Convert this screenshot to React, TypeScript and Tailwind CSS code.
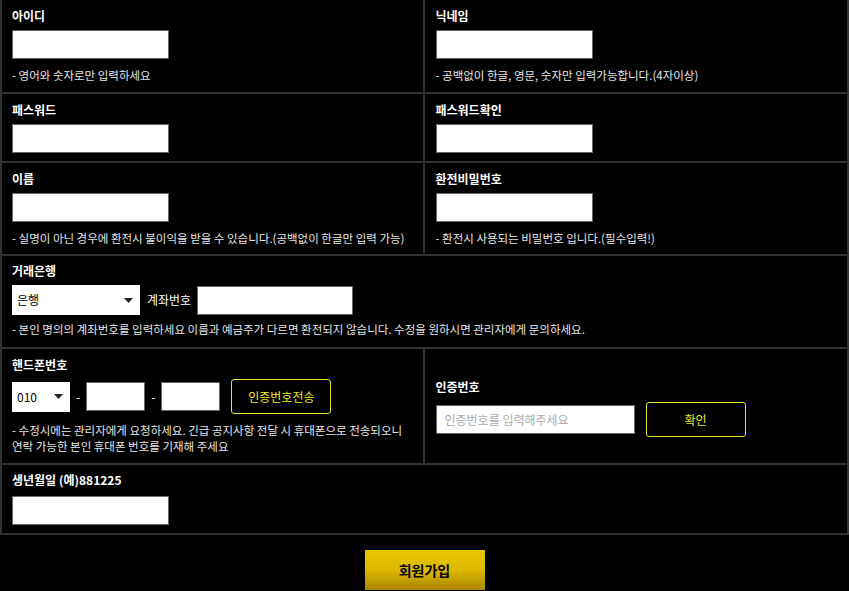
import React from "react";

const font = "font-['Noto_Sans_CJK_KR','Noto_Sans',sans-serif]";

function Label({ children }: { children: React.ReactNode }) {
  return <div className="text-[12px] font-bold leading-[16px] text-white">{children}</div>;
}

function Help({ children }: { children: React.ReactNode }) {
  return <div className="mt-[8px] text-[11.5px] leading-[16px] text-[#e6e6e6]">{children}</div>;
}

function Box({ w = "w-[157px]", placeholder }: { w?: string; placeholder?: string }) {
  return (
    <input
      className={`${w} h-[29px] border border-[#666] bg-white px-2 text-[12px] text-black outline-none placeholder:text-[#aaa]`}
      placeholder={placeholder}
    />
  );
}

function Caret() {
  return (
    <svg width="9" height="5" viewBox="0 0 9 5">
      <path d="M0 0h9L4.5 5z" fill="#222" />
    </svg>
  );
}

function FakeSelect({ label, w }: { label: string; w: string }) {
  return (
    <div className={`${w} flex h-[30px] items-center justify-between bg-white pl-[5px] pr-[7px] text-[12px] text-black`}>
      <span>{label}</span>
      <Caret />
    </div>
  );
}

function Cell({ children, right = false, pb = "pb-[8px]" }: { children: React.ReactNode; right?: boolean; pb?: string }) {
  return (
    <div className={`px-[10px] pt-[8px] ${pb} ${right ? "pl-[11px]" : "border-r-2 border-[#333]"}`}>
      {children}
    </div>
  );
}

export default function App() {
  return (
    <div className={`min-h-[591px] w-[849px] bg-black ${font}`}>
      <div className="border-x-2 border-b-2 border-[#333]">
        {/* 아이디 / 닉네임 */}
        <div className="grid grid-cols-2 border-b-2 border-[#333]">
          <Cell pb="pb-[9px]">
            <Label>아이디</Label>
            <div className="mt-[6px]"><Box /></div>
            <Help>- 영어와 숫자로만 입력하세요</Help>
          </Cell>
          <Cell right pb="pb-[9px]">
            <Label>닉네임</Label>
            <div className="mt-[6px]"><Box /></div>
            <Help>- 공백없이 한글, 영문, 숫자만 입력가능합니다.(4자이상)</Help>
          </Cell>
        </div>

        {/* 패스워드 */}
        <div className="grid grid-cols-2 border-b-2 border-[#333]">
          <Cell>
            <Label>패스워드</Label>
            <div className="mt-[6px]"><Box /></div>
          </Cell>
          <Cell right>
            <Label>패스워드확인</Label>
            <div className="mt-[6px]"><Box /></div>
          </Cell>
        </div>

        {/* 이름 / 환전비밀번호 */}
        <div className="grid grid-cols-2 border-b-2 border-[#333]">
          <Cell>
            <Label>이름</Label>
            <div className="mt-[6px]"><Box /></div>
            <Help>- 실명이 아닌 경우에 환전시 불이익을 받을 수 있습니다.(공백없이 한글만 입력 가능)</Help>
          </Cell>
          <Cell right>
            <Label>환전비밀번호</Label>
            <div className="mt-[6px]"><Box /></div>
            <Help>- 환전시 사용되는 비밀번호 입니다.(필수입력!)</Help>
          </Cell>
        </div>

        {/* 거래은행 */}
        <div className="border-b-2 border-[#333] px-[10px] pt-[7px] pb-[10px]">
          <Label>거래은행</Label>
          <div className="mt-[6px] flex items-center">
            <FakeSelect label="은행" w="w-[128px]" />
            <span className="ml-[7px] mr-[6px] text-[12px] text-white">계좌번호</span>
            <Box w="w-[156px]" />
          </div>
          <div className="mt-[6px] text-[11.5px] leading-[16px] text-[#e6e6e6]">
            - 본인 명의의 계좌번호를 입력하세요 이름과 예금주가 다르면 환전되지 않습니다. 수정을 원하시면 관리자에게 문의하세요.
          </div>
        </div>

        {/* 핸드폰번호 / 인증번호 */}
        <div className="grid grid-cols-2 border-b-2 border-[#333]">
          <Cell pb="pb-[9px]">
            <Label>핸드폰번호</Label>
            <div className="mt-[6px] flex items-center">
              <FakeSelect label="010" w="w-[58px]" />
              <span className="mx-[6px] text-[12px] text-white">-</span>
              <Box w="w-[59px]" />
              <span className="mx-[6px] text-[12px] text-white">-</span>
              <Box w="w-[59px]" />
              <button className="ml-[11px] h-[35px] w-[100px] rounded-[3px] border border-[#e8e41c] text-[12px] text-[#f0ec20]">
                인증번호전송
              </button>
            </div>
            <Help>
              - 수정시에는 관리자에게 요청하세요. 긴급 공지사항 전달 시 휴대폰으로 전송되오니
              <br />
              연락 가능한 본인 휴대폰 번호를 기재해 주세요
            </Help>
          </Cell>
          <div className="flex flex-col justify-center pl-[11px] pt-[4px]">
            <Label>인증번호</Label>
            <div className="mt-[7px] flex items-center">
              <Box w="w-[199px]" placeholder="인증번호를 입력해주세요" />
              <button className="ml-[11px] h-[35px] w-[100px] rounded-[3px] border border-[#e8e41c] text-[12px] text-[#f0ec20]">
                확인
              </button>
            </div>
          </div>
        </div>

        {/* 생년월일 */}
        <div className="px-[10px] pt-[7px] pb-[8px]">
          <Label>생년월일 (예)881225</Label>
          <div className="mt-[8px]"><Box /></div>
        </div>
      </div>

      <div className="mt-[15px] flex justify-center">
        <button className="h-[40px] w-[120px] bg-gradient-to-b from-[#eac600] via-[#dcb800] to-[#a88500] text-[14px] font-bold text-black">
          회원가입
        </button>
      </div>
    </div>
  );
}
